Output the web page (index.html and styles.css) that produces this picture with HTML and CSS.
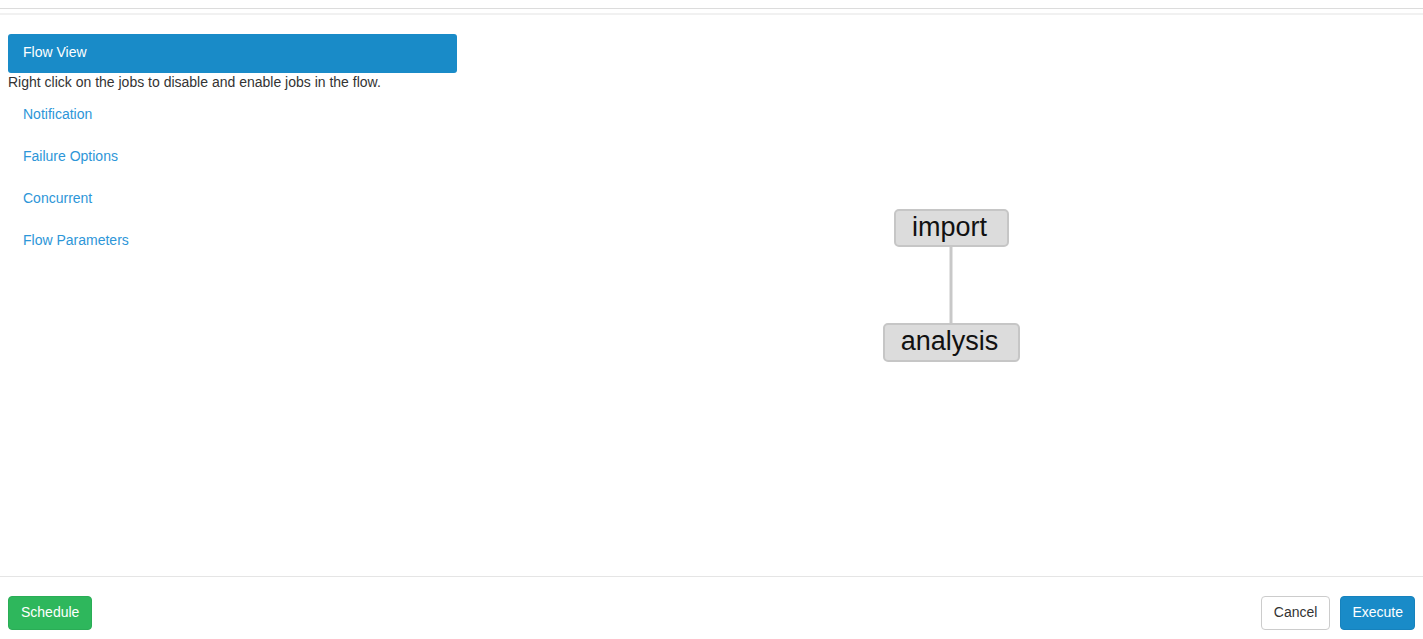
FILE: index.html
```html
<!DOCTYPE html>
<html>
<head>
<meta charset="utf-8">
<title>Execute Flow</title>
<link rel="stylesheet" href="styles.css">
</head>
<body>
<div class="page">
  <div class="top-rule"></div>
  <div class="sub-rule"></div>
  <div class="content">
    <div class="sidebar">
      <div class="nav-active">Flow View</div>
      <p class="hint">Right click on the jobs to disable and enable jobs in the flow.</p>
      <ul class="nav-list">
        <li><a href="#">Notification</a></li>
        <li><a href="#">Failure Options</a></li>
        <li><a href="#">Concurrent</a></li>
        <li><a href="#">Flow Parameters</a></li>
      </ul>
    </div>
    <div class="graph">
      <svg class="graph-svg" width="966" height="561" viewBox="0 0 966 561">
        <line x1="494" y1="232" x2="494" y2="310" class="edge"/>
        <rect x="438" y="195" width="113" height="36" rx="4" class="node"/>
        <text x="492.5" y="220.5" class="node-label">import</text>
        <rect x="427" y="309" width="135" height="37" rx="4" class="node"/>
        <text x="492.5" y="334.5" class="node-label">analysis</text>
      </svg>
    </div>
  </div>
  <div class="footer">
    <button class="btn btn-success">Schedule</button>
    <div class="footer-right">
      <button class="btn btn-default">Cancel</button>
      <button class="btn btn-primary">Execute</button>
    </div>
  </div>
</div>
</body>
</html>
```
FILE: styles.css
```css
html, body {
  margin: 0;
  padding: 0;
  background: #fff;
}
body {
  font-family: "Liberation Sans", Arial, Helvetica, sans-serif;
  font-size: 14px;
  color: #333;
}
.page {
  display: flex;
  flex-direction: column;
  height: 639px;
  overflow: hidden;
}
.top-rule {
  height: 8px;
  border-bottom: 1px solid #dcdcdc;
}
.sub-rule {
  margin-top: 4px;
  border-top: 2px solid #f1f1f1;
}
.content {
  flex: 1;
  display: flex;
  padding: 0 0 0 8px;
  min-height: 0;
}
.sidebar {
  width: 449px;
  flex: none;
  padding-top: 19px;
}
.nav-active {
  height: 39px;
  line-height: 36px;
  padding-left: 15px;
  background: #198bc8;
  color: #fff;
  border-radius: 3px;
}
.hint {
  margin: 0;
  line-height: 19px;
  color: #333;
}
.nav-list {
  list-style: none;
  margin: 1px 0 0;
  padding: 0;
}
.nav-list li {
  height: 42px;
  line-height: 42px;
  padding-left: 15px;
}
.nav-list a {
  color: #2d96d8;
  text-decoration: none;
}
.graph {
  flex: 1;
  min-width: 0;
}
.graph-svg {
  display: block;
}
.edge {
  stroke: #c8c8c8;
  stroke-width: 3;
}
.node {
  fill: #dcdcdc;
  stroke: #c6c6c6;
  stroke-width: 2;
}
.node-label {
  font-family: "Liberation Sans", Arial, sans-serif;
  font-size: 27px;
  fill: #111;
  text-anchor: middle;
}
.footer {
  border-top: 1px solid #e5e5e5;
  padding: 19px 8px 9px;
  display: flex;
  justify-content: space-between;
  align-items: center;
}
.footer-right {
  display: flex;
  gap: 10px;
}
.btn {
  font-family: "Liberation Sans", Arial, sans-serif;
  font-size: 14px;
  height: 34px;
  padding: 0 12px 2px;
  border-radius: 4px;
  border: 1px solid transparent;
  cursor: pointer;
}
.btn-success {
  background: #2eb75c;
  border-color: #2aad56;
  color: #fff;
}
.btn-default {
  background: #fff;
  border-color: #ccc;
  color: #333;
}
.btn-primary {
  background: #198bc8;
  border-color: #1682bd;
  color: #fff;
  padding-left: 11px;
  padding-right: 11px;
}
```
